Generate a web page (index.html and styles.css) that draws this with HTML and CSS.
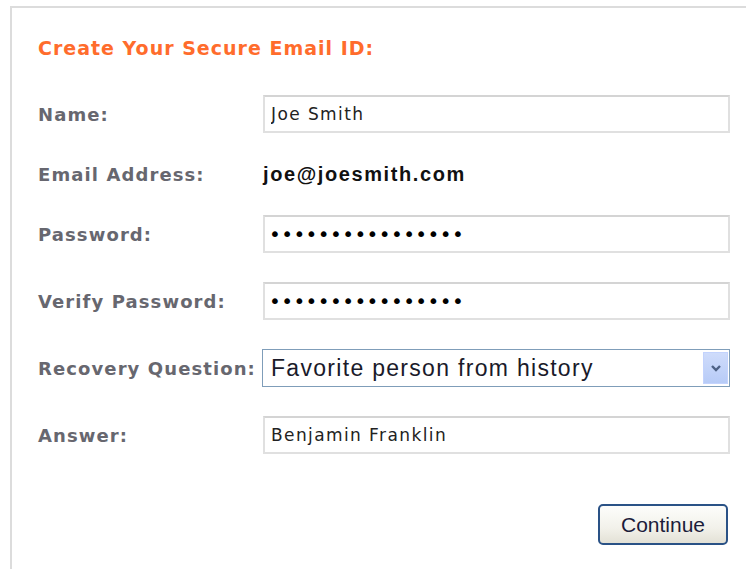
FILE: index.html
```html
<!DOCTYPE html>
<html lang="en">
<head>
<meta charset="utf-8">
<title>Create Your Secure Email ID</title>
<link rel="stylesheet" href="styles.css">
</head>
<body>
<div class="panel">
  <h1 class="panel__title">Create Your Secure Email ID:</h1>
  <form class="signup">
    <div class="row">
      <label class="row__label" for="name">Name:</label>
      <input class="field" id="name" type="text" value="Joe Smith">
    </div>
    <div class="row row--email">
      <span class="row__label">Email Address:</span>
      <span class="email">joe@joesmith.com</span>
    </div>
    <div class="row">
      <label class="row__label" for="pw">Password:</label>
      <input class="field field--secret" id="pw" type="password" value="abcdefghijklmnop">
    </div>
    <div class="row row--loose">
      <label class="row__label" for="pw2">Verify Password:</label>
      <input class="field field--secret" id="pw2" type="password" value="abcdefghijklmnop">
    </div>
    <div class="row row--loose">
      <label class="row__label" for="q">Recovery Question:</label>
      <div class="select" id="q">
        <span class="select__value">Favorite person from history</span>
        <span class="select__button">
          <svg width="12" height="8" viewBox="0 0 12 8"><path d="M2 2 L6 6 L10 2" fill="none" stroke="#4d6185" stroke-width="2.4"/></svg>
        </span>
      </div>
    </div>
    <div class="row row--loose">
      <label class="row__label" for="answer">Answer:</label>
      <input class="field" id="answer" type="text" value="Benjamin Franklin">
    </div>
    <div class="actions">
      <button class="btn" type="button">Continue</button>
    </div>
  </form>
</div>
</body>
</html>
```

FILE: styles.css
```css
html, body {
  margin: 0;
  padding: 0;
  background: #fff;
}

body {
  width: 746px;
  height: 569px;
  overflow: hidden;
}

.panel {
  margin: 6px 0 0 10px;
  border-top: 2px solid #dcdcdc;
  border-left: 2px solid #dcdcdc;
  padding: 26px 0 0 26px;
  height: 563px;
  box-sizing: border-box;
}

.panel__title {
  margin: 0;
  font-family: "DejaVu Sans", Verdana, sans-serif;
  font-weight: bold;
  font-size: 19px;
  letter-spacing: 1px;
  line-height: 28px;
  color: #ff6c2c;
}

.signup {
  margin-top: 33px;
  display: flex;
  flex-direction: column;
  gap: 22px;
  width: 692px;
}

.row {
  display: flex;
  align-items: center;
  height: 38px;
}

.row--loose {
  margin-top: 7px;
}

.row__label {
  flex: 0 0 225px;
  font-family: "DejaVu Sans", Verdana, sans-serif;
  font-weight: bold;
  font-size: 18px;
  color: #67676f;
  letter-spacing: 1.1px;
}

.field {
  box-sizing: border-box;
  width: 467px;
  height: 38px;
  margin: 0;
  padding: 0 0 0 6px;
  border: 2px solid #e0e0e0;
  border-top-color: #d4d4d4;
  background: #fff;
  font-family: "DejaVu Sans", Verdana, sans-serif;
  font-size: 17px;
  letter-spacing: 1.4px;
  color: #222;
  outline: none;
}

.field--secret {
  padding-left: 4px;
  font-size: 20px;
  letter-spacing: 0.4px;
  color: #000;
}

.email {
  font-family: "Liberation Sans", Arial, sans-serif;
  font-weight: bold;
  font-size: 20px;
  letter-spacing: 1.6px;
  color: #111;
}

.select {
  box-sizing: border-box;
  width: 468px;
  height: 38px;
  margin-left: -1px;
  display: flex;
  align-items: center;
  border: 1px solid #7f9db9;
  padding: 2px 1px 2px 8px;
  background: #fff;
}

.select__value {
  flex: 1;
  font-family: "Liberation Sans", Arial, sans-serif;
  font-size: 23px;
  color: #1a1a2a;
  letter-spacing: 1.3px;
}

.select__button {
  width: 25px;
  height: 32px;
  display: flex;
  align-items: center;
  justify-content: center;
  background: linear-gradient(#cfdcfb, #b7cbf7);
  border: 1px solid #c3d3fd;
  box-sizing: border-box;
}

.actions {
  display: flex;
  justify-content: flex-end;
  margin-top: 28px;
  padding-right: 2px;
}

.btn {
  width: 130px;
  height: 41px;
  border: 2px solid #2a5286;
  border-radius: 5px;
  background: linear-gradient(#fdfdfb, #f2f1ea 60%, #e3e1d6);
  font-family: "Liberation Sans", Arial, sans-serif;
  font-size: 21px;
  color: #1c1c3a;
  padding: 0;
}
```
